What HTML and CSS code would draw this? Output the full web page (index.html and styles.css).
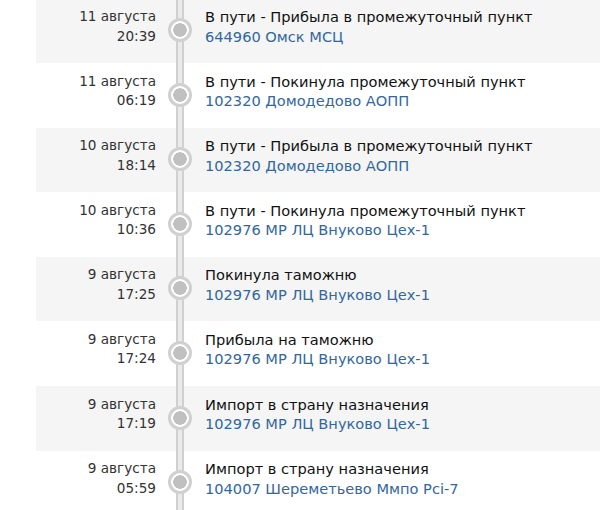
FILE: index.html
```html
<!DOCTYPE html>
<html lang="ru">
<head>
<meta charset="utf-8">
<link rel="stylesheet" href="styles.css">
</head>
<body>
<div class="track">
  <div class="row alt">
    <div class="when"><div>11 августа</div><div>20:39</div></div>
    <div class="axis"><span class="dot"></span></div>
    <div class="what"><div class="status">В пути - Прибыла в промежуточный пункт</div><div class="place">644960 Омск МСЦ</div></div>
  </div>
  <div class="row">
    <div class="when"><div>11 августа</div><div>06:19</div></div>
    <div class="axis"><span class="dot"></span></div>
    <div class="what"><div class="status">В пути - Покинула промежуточный пункт</div><div class="place">102320 Домодедово АОПП</div></div>
  </div>
  <div class="row alt">
    <div class="when"><div>10 августа</div><div>18:14</div></div>
    <div class="axis"><span class="dot"></span></div>
    <div class="what"><div class="status">В пути - Прибыла в промежуточный пункт</div><div class="place">102320 Домодедово АОПП</div></div>
  </div>
  <div class="row">
    <div class="when"><div>10 августа</div><div>10:36</div></div>
    <div class="axis"><span class="dot"></span></div>
    <div class="what"><div class="status">В пути - Покинула промежуточный пункт</div><div class="place">102976 МР ЛЦ Внуково Цех-1</div></div>
  </div>
  <div class="row alt">
    <div class="when"><div>9 августа</div><div>17:25</div></div>
    <div class="axis"><span class="dot"></span></div>
    <div class="what"><div class="status">Покинула таможню</div><div class="place">102976 МР ЛЦ Внуково Цех-1</div></div>
  </div>
  <div class="row">
    <div class="when"><div>9 августа</div><div>17:24</div></div>
    <div class="axis"><span class="dot"></span></div>
    <div class="what"><div class="status">Прибыла на таможню</div><div class="place">102976 МР ЛЦ Внуково Цех-1</div></div>
  </div>
  <div class="row alt">
    <div class="when"><div>9 августа</div><div>17:19</div></div>
    <div class="axis"><span class="dot"></span></div>
    <div class="what"><div class="status">Импорт в страну назначения</div><div class="place">102976 МР ЛЦ Внуково Цех-1</div></div>
  </div>
  <div class="row">
    <div class="when"><div>9 августа</div><div>05:59</div></div>
    <div class="axis"><span class="dot"></span></div>
    <div class="what"><div class="status">Импорт в страну назначения</div><div class="place">104007 Шереметьево Ммпо Pci-7</div></div>
  </div>
</div>
</body>
</html>
```
FILE: styles.css
```css
html, body {
  margin: 0;
  padding: 0;
  background: #ffffff;
}
body {
  font-family: "DejaVu Sans", Verdana, sans-serif;
  font-size: 14px;
  line-height: 19.5px;
  overflow: hidden;
}
.track {
  margin: -1.5px 0 0 36px;
}
.row {
  display: grid;
  grid-template-columns: 120px 48px 1fr;
  height: 64.6px;
  box-sizing: border-box;
}
.row.alt {
  background: #f5f5f5;
}
.when {
  text-align: right;
  color: #333333;
  font-size: 13.6px;
  padding-top: 8.5px;
}
.axis {
  background: linear-gradient(to right,
    transparent 0 20px,
    #d0d0d0 20px 22px,
    #eaeaea 22px 26px,
    #d0d0d0 26px 28px,
    transparent 28px);
  display: flex;
  justify-content: center;
  align-items: flex-start;
}
.dot {
  margin-top: 19.5px;
  width: 24px;
  height: 24px;
  box-sizing: border-box;
  border-radius: 50%;
  border: 3px solid #d0d0d0;
  background: radial-gradient(circle, #c0c0c0 0 6.5px, #ffffff 7px);
}
.what {
  padding-top: 8.5px;
  padding-left: 1px;
  white-space: nowrap;
  font-size: 14.6px;
}
.status {
  color: #111111;
}
.place {
  color: #33679d;
}
```
